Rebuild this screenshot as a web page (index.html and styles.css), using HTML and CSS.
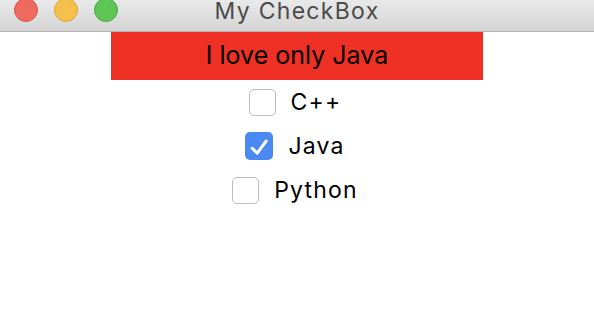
FILE: index.html
```html
<!DOCTYPE html>
<html lang="en">
<head>
  <meta charset="UTF-8" />
  <title>My CheckBox</title>
  <link rel="stylesheet" href="styles.css">
</head>
<body>
  <div class="titlebar">
    <div class="lights">
      <span class="light red"></span>
      <span class="light yellow"></span>
      <span class="light green"></span>
    </div>
    <div class="title">My CheckBox</div>
    <div></div>
  </div>

  <div class="banner">I love only Java</div>

  <div class="choices">
    <label class="choice">
      <span class="box"></span>
      <span class="text">C++</span>
    </label>
    <label class="choice">
      <span class="box checked">
        <svg width="28" height="28" viewBox="0 0 28 28">
          <path d="M7.3 16.4 L12.3 21.2 L21.2 9" fill="none" stroke="#fff" stroke-width="3" stroke-linecap="round" stroke-linejoin="round"/>
        </svg>
      </span>
      <span class="text">Java</span>
    </label>
    <label class="choice">
      <span class="box"></span>
      <span class="text">Python</span>
    </label>
  </div>
</body>
</html>
```

FILE: styles.css
```css
body {
  margin: 0;
  background: #fff;
  font-family: Inter, 'Liberation Sans', sans-serif;
  color: #000;
}
.titlebar {
  display: grid;
  grid-template-columns: 1fr auto 1fr;
  height: 31px;
  background: linear-gradient(#e9e9e9, #d5d5d5);
  border-bottom: 1px solid #b4b4b4;
  overflow: hidden;
}
.lights {
  display: flex;
  gap: 16px;
  padding-left: 14px;
  margin-top: -2px;
}
.light {
  width: 24px;
  height: 24px;
  border-radius: 50%;
  box-sizing: border-box;
}
.red {
  background: #ee6a5f;
  border: 1px solid #d9564c;
}
.yellow {
  background: #f6c04f;
  border: 1px solid #dea639;
}
.green {
  background: #5ec654;
  border: 1px solid #4aa93f;
}
.title {
  font-size: 23px;
  line-height: 22px;
  letter-spacing: 1.3px;
  color: #4b4b4b;
}
.banner {
  width: 372px;
  height: 48px;
  margin: 0 auto;
  background: #ee3124;
  display: flex;
  align-items: center;
  justify-content: center;
  font-size: 25px;
  padding-bottom: 2px;
  box-sizing: border-box;
}
.choices {
  display: flex;
  flex-direction: column;
  align-items: center;
  padding-right: 4px;
}
.choice {
  display: flex;
  align-items: center;
  gap: 15px;
  height: 44px;
}
.box {
  width: 27px;
  height: 27px;
  box-sizing: border-box;
  border: 1px solid #bdbdbd;
  border-radius: 5px;
  background: #fff;
}
.box.checked {
  width: 28px;
  height: 28px;
  border: none;
  background: #4a88f2;
}
.box svg {
  display: block;
}
.text {
  font-size: 23px;
  letter-spacing: 1.2px;
}
```
